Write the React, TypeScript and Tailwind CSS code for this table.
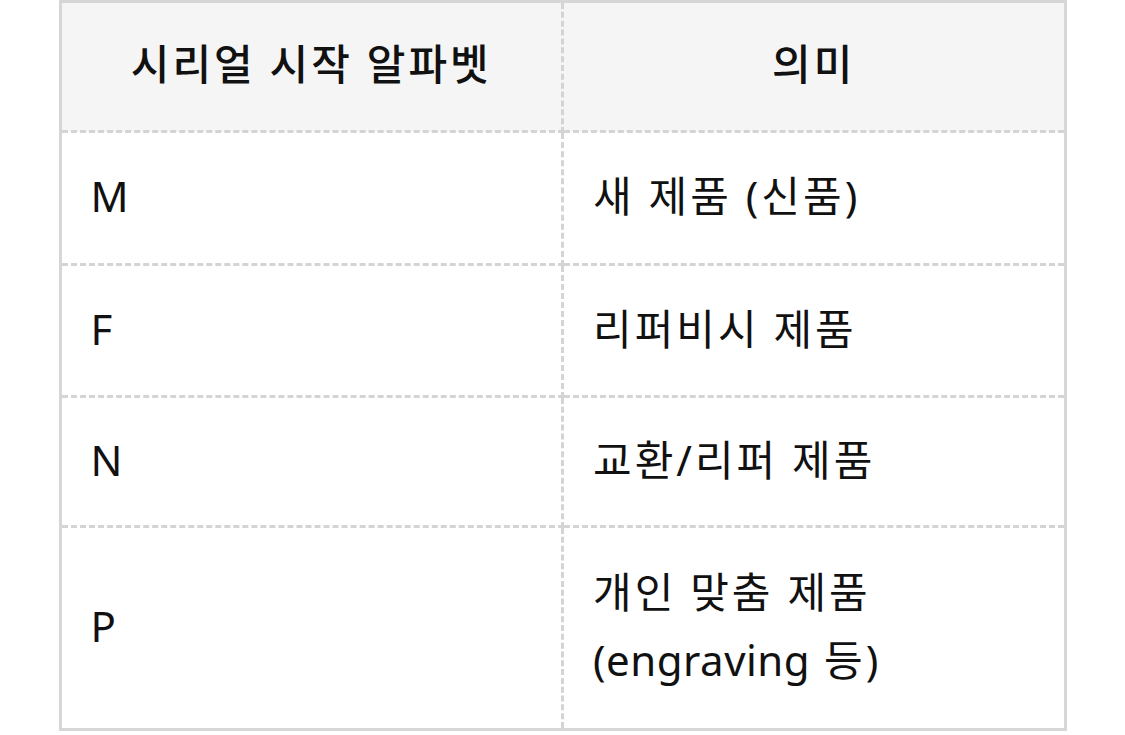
export default function App() {
  const rows: { code: string; meaning: React.ReactNode[]; h: string }[] = [
    { code: "M", meaning: ["새 제품 (신품)"], h: "h-[133px]" },
    { code: "F", meaning: ["리퍼비시 제품"], h: "h-[132px]" },
    { code: "N", meaning: ["교환/리퍼 제품"], h: "h-[130px]" },
    {
      code: "P",
      meaning: [
        "개인 맞춤 제품",
        <>
          <span className="tracking-[0.5px]">(engraving</span> 등)
        </>,
      ],
      h: "h-[203px]",
    },
  ];

  const cell = "border-[3px] border-dashed border-[#d4d4d4]";

  return (
    <div
      className="min-h-screen bg-white"
      style={{ fontFamily: '"Noto Sans", "Noto Sans CJK KR", sans-serif' }}
    >
      <table className="mx-auto w-[1008px] table-fixed border-collapse border-[3px] border-solid border-[#d6d6d6] text-[#111] text-[42px] tracking-[3px]">
        <thead>
          <tr className="h-[130px] bg-[#f5f5f5]">
            <th className={`${cell} pb-[6px] text-center font-medium`}>시리얼 시작 알파벳</th>
            <th className={`${cell} pb-[6px] text-center font-medium`}>의미</th>
          </tr>
        </thead>
        <tbody>
          {rows.map((r) => (
            <tr key={r.code} className={r.h}>
              <td className={`${cell} pl-[29px] pb-[4px] font-normal leading-[68px]`}>{r.code}</td>
              <td className={`${cell} pl-[29px] pb-[4px] font-normal leading-[68px]`}>
                {r.meaning.map((m, i) => (
                  <div key={i}>{m}</div>
                ))}
              </td>
            </tr>
          ))}
        </tbody>
      </table>
    </div>
  );
}
